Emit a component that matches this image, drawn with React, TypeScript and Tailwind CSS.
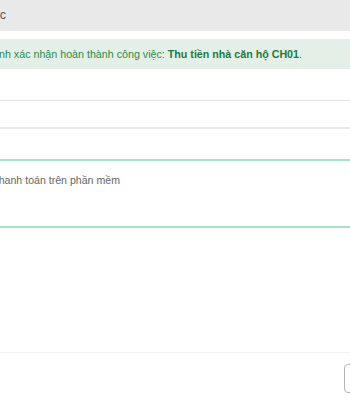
// Modal fragment: "Xác nhận hoàn thành công việc" — clipped on the left by the viewport.
export default function App() {
  const font = { fontFamily: '"Liberation Sans", Arial, sans-serif' };

  return (
    <div className="w-[350px] h-[400px] overflow-hidden bg-white flex flex-col" style={font}>
      {/* Header */}
      <div className="h-[31px] shrink-0 bg-[#e9e9e9] flex items-center">
        <div className="w-[6px] flex justify-end whitespace-nowrap text-[12.5px] text-[#555]">
          <span>Xác nhận hoàn thành công việc</span>
        </div>
      </div>

      {/* Alert */}
      <div className="mt-[8px] h-[30px] shrink-0 bg-[#e3efe7] flex items-center">
        <div className="w-[302px] flex justify-end whitespace-nowrap text-[10.7px] text-[#2e8b4e]">
          <span>
            Bạn đang thực hiện lệnh xác nhận hoàn thành công việc:{" "}
            <b className="text-[#1f7a3f]">Thu tiền nhà căn hộ CH01</b>.
          </span>
        </div>
      </div>

      {/* Fields */}
      <div className="h-[32px] shrink-0 border-b border-[#e4e4e4]" />
      <div className="h-[28px] shrink-0 border-b-2 border-[#e8e8ec]" />
      <div className="h-[30px] shrink-0" />
      <div className="h-[69px] shrink-0 border-y-2 border-[#a6e3c3] pt-[12px]">
        <div className="w-[120px] flex justify-end whitespace-nowrap text-[10.6px] text-[#666]">
          <span>Thanh toán trên phần mềm</span>
        </div>
      </div>

      <div className="flex-1" />

      {/* Footer */}
      <div className="h-[48px] shrink-0 border-t border-[#f1f1f1] flex items-start pt-[11px] pl-[344px]">
        <div className="shrink-0 w-[60px] h-[29px] rounded-[4px] border border-[#b5b5b5] bg-white" />
      </div>
    </div>
  );
}
